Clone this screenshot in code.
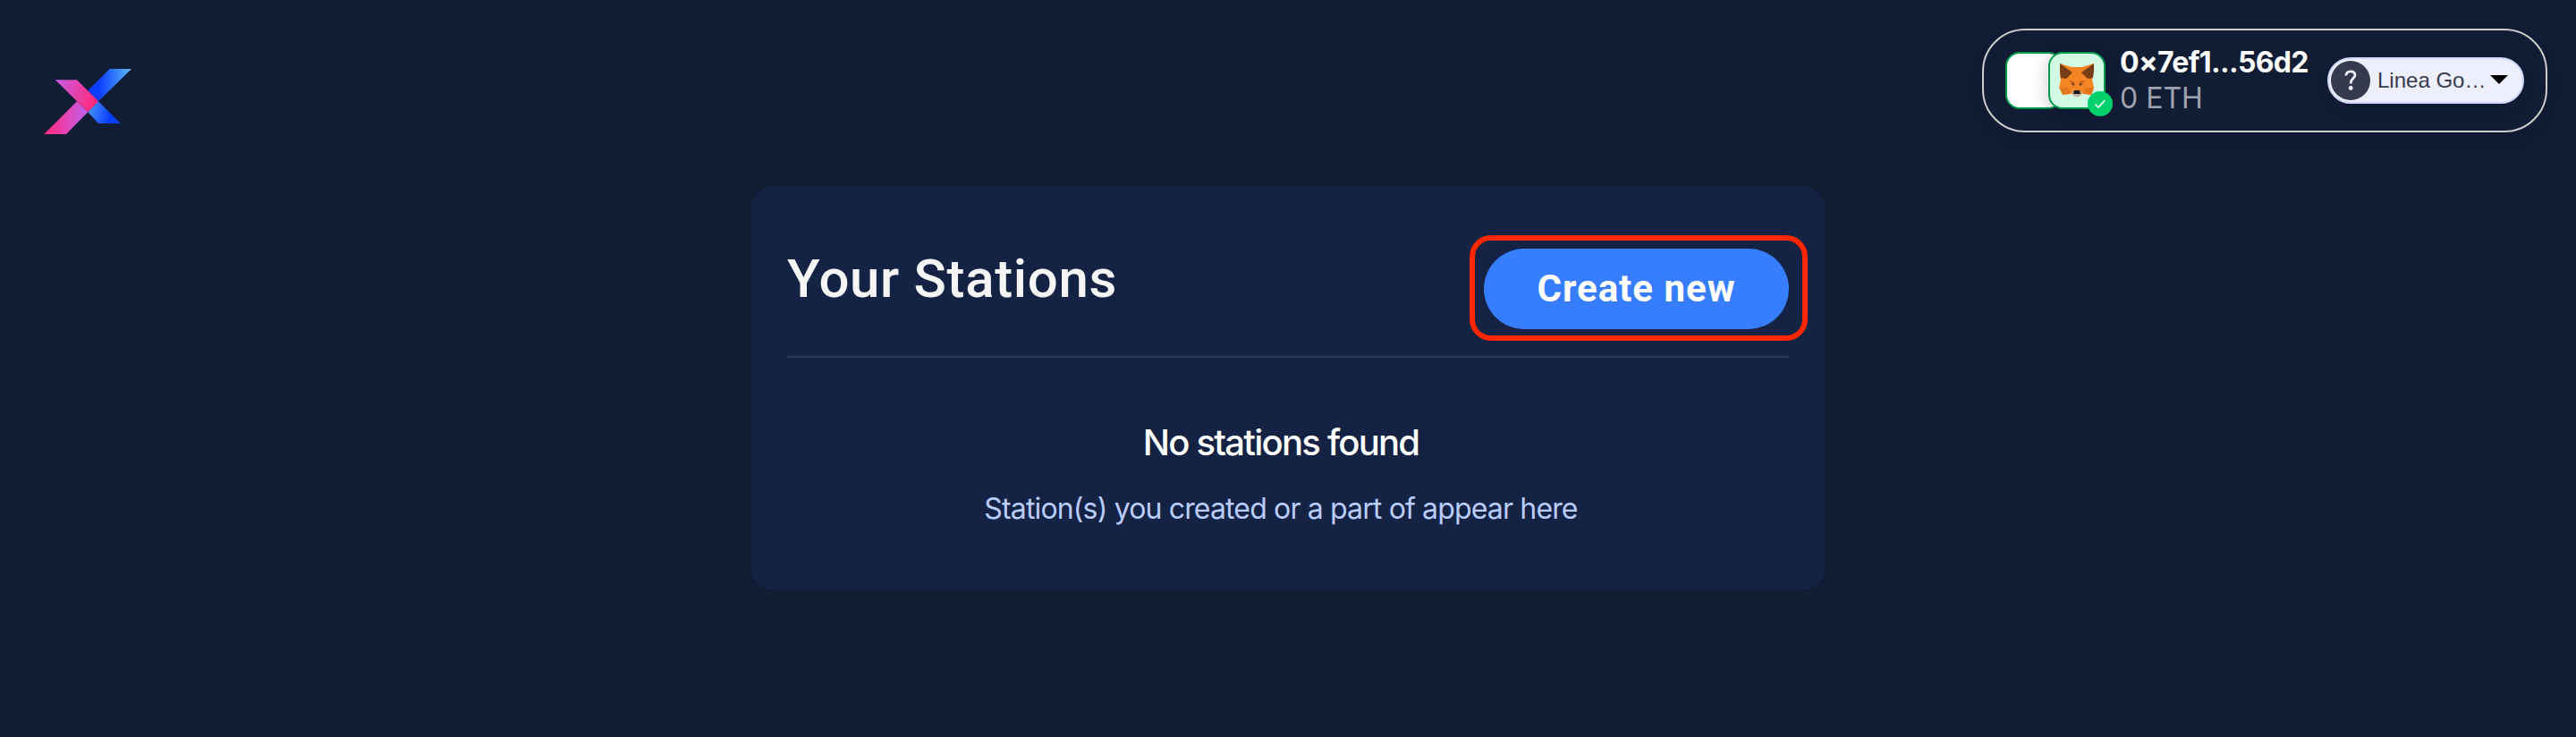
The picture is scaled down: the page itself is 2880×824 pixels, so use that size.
<div class="page">
  <header>
    <svg class="logo" width="100" height="76" viewBox="0 0 100 76">
      <defs>
        <linearGradient id="a" x1="0.25" y1="0" x2="0.95" y2="0"><stop stop-color="#0a3cff" /><stop offset="1" stop-color="#58b4f8" /></linearGradient>
        <linearGradient id="b" x1="0" y1="0" x2="1" y2="0.25"><stop stop-color="#c45ee6" /><stop offset="1" stop-color="#ff2b80" /></linearGradient>
        <linearGradient id="c" x1="0" y1="0" x2="1" y2="0"><stop offset="0.1" stop-color="#ff2e86" /><stop offset="1" stop-color="#c060ea" /></linearGradient>
        <linearGradient id="d" x1="0" y1="0" x2="1" y2="0.2"><stop stop-color="#4c9cfb" /><stop offset="0.8" stop-color="#0a3cff" /></linearGradient>
      </defs>
      <path fill="url(#a)" d="M73.7 1H98L61 37.3 49.3 25.3z" />
      <path fill="url(#d)" d="M49.3 49.3 61 37.3 85.7 62H61z" />
      <path fill="url(#c)" d="M37 37.3 49.3 49.3 25 74H.3z" />
      <path fill="url(#b)" d="M12.7 13.3H37L61 37.3 49.3 49.3z" />
    </svg>

    <div class="wallet">
      <div class="avatars">
        <div class="tile"></div>
        <div class="tile fox">
          <svg width="40" height="38" viewBox="0 0 40 38">
            <path fill="#f58423" d="M1 1 14 5h12L39 1l-1 14-1 4 2 9-3 8-8-2-4 2h-8l-4-2-8 2-4-8 2-9-1-4z" />
            <path fill="#763d16" d="M1 1 15 11 8 18 2 17 1 9zM39 1 25 11l7 7 6-1 1-8z" />
            <path fill="#e4761b" d="M1 28h10l2 7-9 1zM39 28H29l-2 7 9 1zM11 20l6 2-1 5zM29 20l-6 2 1 5z" />
            <path fill="#cd6116" d="M10 20l7 1 1 4zM30 20l-7 1-1 4z" />
            <path fill="#233447" d="M13 23l4 1v2zM27 23l-4 1v2z" />
            <path fill="#c0ad9e" d="M14 33l3-2h6l3 2-3 5h-6z" />
            <path fill="#161616" d="M17 31h6l1 4h-8z" />
          </svg>
          <span class="badge"><svg width="14" height="12" viewBox="0 0 14 12"><path d="M1.5 6.5 5 10l7.500-8" fill="none" stroke="#fff" stroke-width="1.600" /></svg></span>
        </div>
      </div>
      <div class="account">
        <div class="address">0×7ef1...56d2</div>
        <div class="balance">0 ETH</div>
      </div>
      <div class="network">
        <span class="question">
          <svg width="14" height="24" viewBox="0 0 14 24"><path d="M1.800 6.500C2 3.500 4 1.800 7 1.800s5 1.700 5 4.300C12 9.600 7.200 9.800 7.200 14.500V15.500" fill="none" stroke="#edeffc" stroke-width="2.800" /><circle cx="7.200" cy="20.500" r="2.400" fill="#edeffc" /></svg>
        </span>
        <span class="chain">Linea Go…</span>
        <svg class="caret" width="20" height="10" viewBox="0 0 20 10"><path d="M0 0h20L10 10z" /></svg>
      </div>
    </div>
  </header>

  <main class="card">
    <div class="top">
      <h1>Your Stations</h1>
      <button>Create new</button>
    </div>
    <div class="empty">
      <h2>No stations found</h2>
      <p>Station(s) you created or a part of appear here</p>
    </div>
  </main>
</div>

<style>
  :global(body) { background: #111c35; }
  .page { height: 824px; overflow: hidden; font-family: Inter, sans-serif; background: #111c35; }
  header { display: flex; justify-content: space-between; align-items: flex-start; height: 208px; box-sizing: border-box; padding: 32px 32px 0 49px; }
  .logo { margin-top: 44px; }
  .wallet { display: flex; align-items: center; box-sizing: border-box; width: 632px; height: 116px; border: 2px solid #ccc; border-radius: 48px; padding: 0 24px; box-shadow: 0 8px 24px rgba(0, 0, 0, 0.1); }
  .avatars { display: flex; width: 112px; }
  .tile { box-sizing: border-box; flex: none; width: 64px; height: 64px; border: 2px solid #009a4e; border-radius: 16px; background: #fff; }
  .fox { position: relative; display: flex; align-items: center; justify-content: center; margin-left: -16px; background: #d1f9e4; box-shadow: 0 4px 20px rgba(0, 0, 0, 0.22); }
  .fox > svg { margin-top: -2px; }
  .badge { position: absolute; right: -10px; bottom: -10px; display: flex; align-items: center; justify-content: center; width: 28px; height: 28px; border-radius: 50%; background: #00d06c; }
  .account { flex: 1; margin-left: 16px; white-space: nowrap; }
  .address { font-size: 32px; line-height: 40px; font-weight: 700; color: #fff; letter-spacing: -0.65px; }
  .balance { font-size: 32px; line-height: 40px; color: #9fa3af; }
  .network { display: flex; align-items: center; box-sizing: border-box; width: 220px; height: 52px; border: 2px solid #d0d6fa; border-radius: 26px; background: #edeffc; padding-left: 2px; box-shadow: 0 8px 24px rgba(0, 0, 0, 0.1); }
  .question { display: flex; align-items: center; justify-content: center; width: 44px; height: 44px; border-radius: 50%; background: #353a4f; }
  .chain { width: 126px; margin-left: 8px; font-family: "Liberation Sans", Arial, sans-serif; font-size: 24px; color: #373b4e; }
  .caret { margin-top: -2px; }
  .card { box-sizing: border-box; width: 1200px; height: 451px; margin: 0 auto; padding: 70px 40px 0; border-radius: 24px; background: #142243; text-align: center; }
  .top { display: flex; justify-content: space-between; height: 120px; border-bottom: 2px solid #2c3854; }
  h1 { margin: -2px 0 0; font: 500 60px/72px Roboto, sans-serif; color: #f5f5f5; letter-spacing: 0.65px; }
  button { position: relative; width: 341px; height: 90px; padding: 0; border: 0; border-radius: 45px; background: #377dff; color: #fff; font: 700 42px/90px Roboto, sans-serif; letter-spacing: 1px; }
  button::after { content: ""; position: absolute; inset: -15px -21px -13px -16px; border: 6px solid #ff2600; border-radius: 24px; box-sizing: border-box; }
  .empty { padding-right: 16px; }
  h2 { margin: 71px 0 0; font-size: 40px; line-height: 48px; font-weight: 500; color: #fff; letter-spacing: -1.75px; }
  p { margin: 30px 0 0; font-size: 32px; line-height: 40px; color: #bacdff; letter-spacing: -0.85px; }
</style>
